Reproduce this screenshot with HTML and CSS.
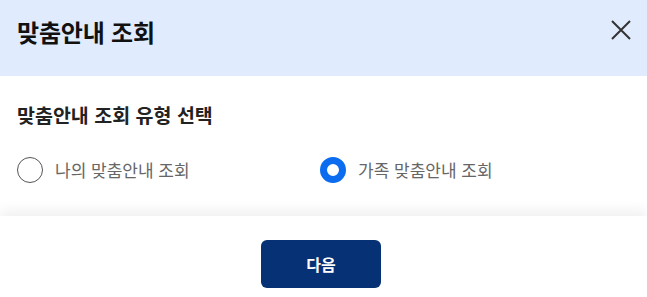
FILE: index.html
```html
<!DOCTYPE html>
<html lang="ko">
<head>
<meta charset="utf-8">
<link rel="stylesheet" href="styles.css">
</head>
<body>
<div class="dialog">
  <header class="dlg-header">
    <h1 class="dlg-title">맞춤안내 조회</h1>
    <button class="close-btn" aria-label="닫기">
      <svg width="24" height="24" viewBox="0 0 24 24"><path d="M3 3 L21 21 M21 3 L3 21" stroke="#333" stroke-width="2" fill="none"/></svg>
    </button>
  </header>
  <section class="dlg-body">
    <h2 class="sub-title">맞춤안내 조회 유형 선택</h2>
    <div class="radio-row">
      <label class="radio"><span class="dot"></span><span class="radio-label">나의 맞춤안내 조회</span></label>
      <label class="radio"><span class="dot checked"></span><span class="radio-label">가족 맞춤안내 조회</span></label>
    </div>
  </section>
  <footer class="dlg-footer">
    <button class="next-btn">다음</button>
  </footer>
</div>
</body>
</html>
```
FILE: styles.css
```css
html, body { margin: 0; padding: 0; background: #fff; }
body { font-family: "Noto Sans CJK KR", "Noto Sans", sans-serif; color: #222; }
.dialog { width: 647px; }
.dlg-header {
  height: 76px;
  box-sizing: border-box;
  background: #e0ebfd;
  display: flex;
  justify-content: space-between;
  align-items: flex-start;
  padding: 15px 14px 0 17px;
}
.dlg-title { margin: 0; font-size: 24px; line-height: 34px; font-weight: 700; color: #111; letter-spacing: -0.2px; }
.close-btn { border: 0; background: none; padding: 0; margin-top: 3px; width: 24px; height: 24px; display: flex; }
.dlg-body { padding: 25px 17px 33px; }
.sub-title { margin: 0; font-size: 19.5px; line-height: 28px; font-weight: 700; color: #222; }
.radio-row { display: grid; grid-template-columns: 303px 1fr; margin-top: 28px; }
.radio { display: flex; align-items: center; gap: 12px; }
.dot { width: 26px; height: 26px; box-sizing: border-box; border-radius: 50%; border: 1px solid #555; background: #fff; flex: none; }
.dot.checked { border: 7px solid #0b6cf0; }
.radio-label { font-size: 17px; line-height: 26px; color: #666; }
.dlg-footer {
  box-shadow: 0 -6px 12px rgba(0,0,0,0.06);
  display: flex;
  justify-content: center;
  padding: 24px 5px 9px 0;
}
.next-btn {
  width: 120px; height: 48px;
  border: 0; border-radius: 6px;
  background: #063174;
  color: #fff;
  font-family: inherit; font-size: 16px; font-weight: 700;
}
```
